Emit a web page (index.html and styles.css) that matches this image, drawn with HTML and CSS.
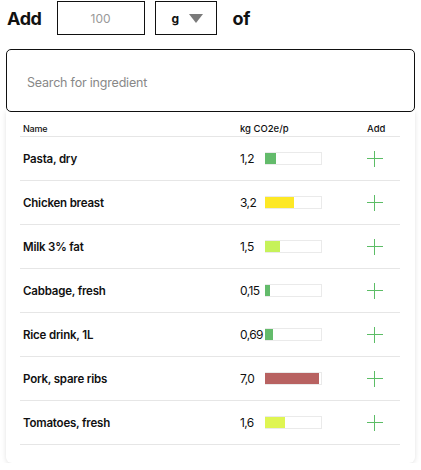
FILE: index.html
```html
<!DOCTYPE html>
<html lang="en">
<head>
  <meta charset="UTF-8">
  <meta name="viewport" content="width=device-width, initial-scale=1.0">
  <title>Add ingredient</title>
  <link rel="stylesheet" href="styles.css">
</head>
<body>
  <div class="amount-row">
    <span class="big-label">Add</span>
    <div class="amount-box">100</div>
    <div class="unit-box">g <span class="caret"></span></div>
    <span class="big-label of">of</span>
  </div>

  <div class="search">Search for ingredient</div>

  <div class="results">
    <div class="row head">
      <div class="col-name">Name</div>
      <div class="col-co2">kg CO2e/p</div>
      <div class="col-add">Add</div>
    </div>

    <div class="row">
      <div class="col-name">Pasta, dry</div>
      <div class="col-co2"><span class="val">1,2</span><span class="bar"><span class="fill green" style="width:11px"></span></span></div>
      <div class="col-add"><span class="plus"></span></div>
    </div>
    <div class="row">
      <div class="col-name">Chicken breast</div>
      <div class="col-co2"><span class="val">3,2</span><span class="bar"><span class="fill yellow" style="width:29px"></span></span></div>
      <div class="col-add"><span class="plus"></span></div>
    </div>
    <div class="row">
      <div class="col-name">Milk 3% fat</div>
      <div class="col-co2"><span class="val">1,5</span><span class="bar"><span class="fill lime" style="width:15px"></span></span></div>
      <div class="col-add"><span class="plus"></span></div>
    </div>
    <div class="row">
      <div class="col-name">Cabbage, fresh</div>
      <div class="col-co2"><span class="val">0,15</span><span class="bar"><span class="fill green" style="width:5px"></span></span></div>
      <div class="col-add"><span class="plus"></span></div>
    </div>
    <div class="row">
      <div class="col-name">Rice drink, 1L</div>
      <div class="col-co2"><span class="val">0,69</span><span class="bar"><span class="fill green" style="width:8px"></span></span></div>
      <div class="col-add"><span class="plus"></span></div>
    </div>
    <div class="row">
      <div class="col-name">Pork, spare ribs</div>
      <div class="col-co2"><span class="val">7,0</span><span class="bar"><span class="fill red" style="width:54px"></span></span></div>
      <div class="col-add"><span class="plus"></span></div>
    </div>
    <div class="row">
      <div class="col-name">Tomatoes, fresh</div>
      <div class="col-co2"><span class="val">1,6</span><span class="bar"><span class="fill citrus" style="width:20px"></span></span></div>
      <div class="col-add"><span class="plus"></span></div>
    </div>
  </div>
</body>
</html>
```

FILE: styles.css
```css
body {
  margin: 0;
  padding: 1px 6px 0;
  font-family: Inter, "Liberation Sans", sans-serif;
  color: #111;
  background: #fff;
}
.amount-row {
  display: flex;
  align-items: center;
  height: 34px;
}
.big-label {
  font-size: 18px;
  font-weight: 700;
  margin-left: 1px;
  margin-right: 15px;
  letter-spacing: -0.4px;
}
.of {
  margin-left: 16px;
}
.amount-box, .unit-box {
  box-sizing: border-box;
  height: 34px;
  border: 1px solid #111;
  display: flex;
  align-items: center;
  font-size: 12px;
}
.amount-box {
  width: 88px;
  justify-content: center;
  color: #999;
  margin-right: 10px;
}
.unit-box {
  width: 62px;
  padding-left: 16px;
  font-weight: 700;
}
.caret {
  margin-left: 10px;
  width: 0;
  height: 0;
  border-left: 7px solid transparent;
  border-right: 7px solid transparent;
  border-top: 9px solid #7a7a7a;
}
.search {
  margin-top: 14px;
  box-sizing: border-box;
  height: 63px;
  border: 1px solid #111;
  border-radius: 5px;
  padding: 3px 0 0 20px;
  display: flex;
  align-items: center;
  font-size: 12.5px;
  color: #888;
  letter-spacing: -0.2px;
  position: relative;
  background: #fff;
}
.results {
  box-sizing: border-box;
  width: 409px;
  margin-top: -1px;
  padding: 10px 15px 18px 14px;
  border-radius: 0 0 6px 6px;
  box-shadow: 0 1px 5px rgba(0, 0, 0, 0.12);
}
.row {
  display: flex;
  align-items: center;
  height: 43px;
  border-bottom: 1px solid #e6e6e6;
}
.row.head {
  height: 15px;
  font-size: 9px;
  font-weight: 500;
}
.col-name {
  flex: 1;
  padding-left: 3px;
  font-size: 11.5px;
  font-weight: 600;
  letter-spacing: -0.2px;
}
.head .col-name {
  font-size: 9px;
  font-weight: 500;
}
.col-co2 {
  width: 127px;
  display: flex;
  align-items: center;
  font-size: 12px;
  letter-spacing: -0.6px;
}
.head .col-co2 {
  font-size: 9.5px;
  letter-spacing: 0;
}
.col-add {
  width: 33px;
  display: flex;
  justify-content: flex-start;
  font-size: 9.5px;
}
.val {
  width: 25px;
}
.bar {
  box-sizing: border-box;
  width: 57px;
  height: 13px;
  border: 1px solid #eaeaea;
  display: flex;
}
.fill {
  height: 11px;
  margin: 0 0 0 -1px;
}
.green { background: #63bb6b; }
.yellow { background: #fde826; }
.lime { background: #c6f25a; }
.red { background: #b86261; }
.citrus { background: #dff552; }
.plus {
  position: relative;
  display: block;
  width: 16px;
  height: 16px;
}
.plus::before, .plus::after {
  content: "";
  position: absolute;
  background: #5cbd66;
}
.plus::before {
  left: 0;
  right: 0;
  top: 7px;
  height: 1px;
}
.plus::after {
  top: 0;
  bottom: 0;
  left: 7px;
  width: 1px;
}
```
